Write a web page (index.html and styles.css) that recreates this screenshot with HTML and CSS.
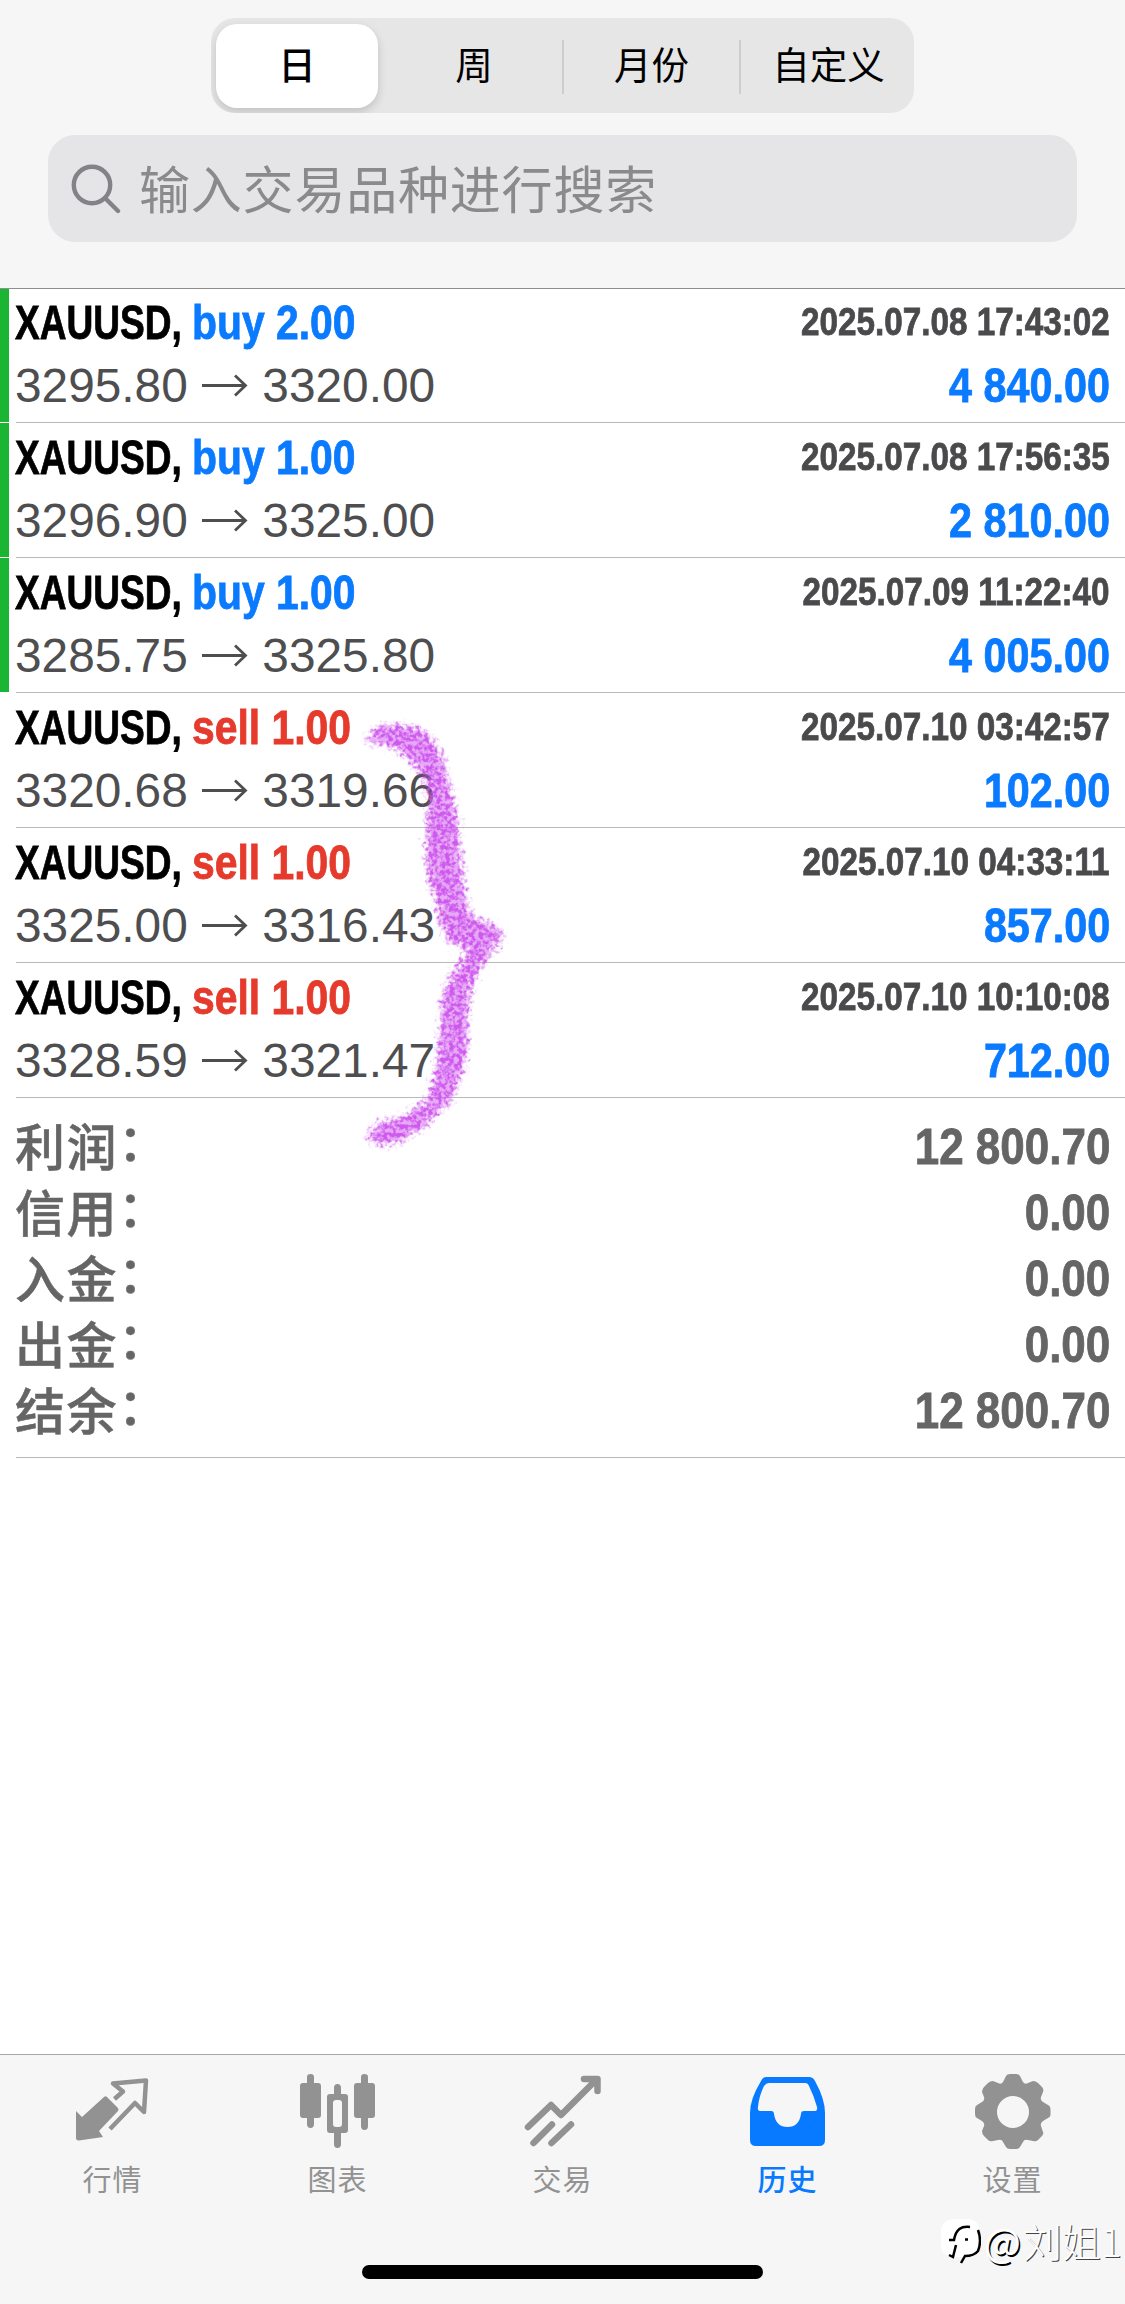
FILE: index.html
```html
<!DOCTYPE html>
<html lang="zh-CN">
<head>
<meta charset="utf-8">
<title>历史</title>
<link rel="stylesheet" href="styles.css">
</head>
<body>
<div class="screen">
  <header class="header">
    <nav class="segments">
      <span class="segment active">日</span>
      <span class="segment">周</span>
      <span class="segment divided">月份</span>
      <span class="segment divided">自定义</span>
    </nav>
    <div class="search">
      <svg class="search-icon" viewBox="0 0 50 50"><circle cx="21" cy="21" r="18.2"/><path d="M34 34L47 47"/></svg>
      <span>输入交易品种进行搜索</span>
    </div>
  </header>

  <main class="content">
    <ul class="deals">
      <li class="deal marked"><div class="line"><b class="symbol">XAUUSD,</b><b class="side buy">buy 2.00</b><time>2025.07.08 17:43:02</time></div><div class="line"><span class="prices">3295.80 <svg class="arrow" viewBox="0 0 46 24"><path d="M0 11.5H43M33 1.5L43.500 11.500L33 21.500"/></svg> 3320.00</span><b class="profit">4 840.00</b></div></li>
      <li class="deal marked"><div class="line"><b class="symbol">XAUUSD,</b><b class="side buy">buy 1.00</b><time>2025.07.08 17:56:35</time></div><div class="line"><span class="prices">3296.90 <svg class="arrow" viewBox="0 0 46 24"><path d="M0 11.5H43M33 1.5L43.500 11.500L33 21.500"/></svg> 3325.00</span><b class="profit">2 810.00</b></div></li>
      <li class="deal marked"><div class="line"><b class="symbol">XAUUSD,</b><b class="side buy">buy 1.00</b><time>2025.07.09 11:22:40</time></div><div class="line"><span class="prices">3285.75 <svg class="arrow" viewBox="0 0 46 24"><path d="M0 11.5H43M33 1.5L43.500 11.500L33 21.500"/></svg> 3325.80</span><b class="profit">4 005.00</b></div></li>
      <li class="deal"><div class="line"><b class="symbol">XAUUSD,</b><b class="side sell">sell 1.00</b><time>2025.07.10 03:42:57</time></div><div class="line"><span class="prices">3320.68 <svg class="arrow" viewBox="0 0 46 24"><path d="M0 11.5H43M33 1.5L43.500 11.500L33 21.500"/></svg> 3319.66</span><b class="profit">102.00</b></div></li>
      <li class="deal"><div class="line"><b class="symbol">XAUUSD,</b><b class="side sell">sell 1.00</b><time>2025.07.10 04:33:11</time></div><div class="line"><span class="prices">3325.00 <svg class="arrow" viewBox="0 0 46 24"><path d="M0 11.5H43M33 1.5L43.500 11.500L33 21.500"/></svg> 3316.43</span><b class="profit">857.00</b></div></li>
      <li class="deal"><div class="line"><b class="symbol">XAUUSD,</b><b class="side sell">sell 1.00</b><time>2025.07.10 10:10:08</time></div><div class="line"><span class="prices">3328.59 <svg class="arrow" viewBox="0 0 46 24"><path d="M0 11.5H43M33 1.5L43.500 11.500L33 21.500"/></svg> 3321.47</span><b class="profit">712.00</b></div></li>
    </ul>

    <dl class="summary">
      <div class="total"><dt>利润<span class="colon">：</span></dt><dd>12 800.70</dd></div>
      <div class="total"><dt>信用<span class="colon">：</span></dt><dd>0.00</dd></div>
      <div class="total"><dt>入金<span class="colon">：</span></dt><dd>0.00</dd></div>
      <div class="total"><dt>出金<span class="colon">：</span></dt><dd>0.00</dd></div>
      <div class="total"><dt>结余<span class="colon">：</span></dt><dd>12 800.70</dd></div>
    </dl>

    <svg class="brace" viewBox="340 690 200 480">
      <defs>
        <filter id="crayon" x="340" y="690" width="200" height="480" filterUnits="userSpaceOnUse" color-interpolation-filters="sRGB">
          <feTurbulence type="fractalNoise" baseFrequency="0.24" numOctaves="2" seed="4" result="noise"/>
          <feGaussianBlur in="SourceGraphic" stdDeviation="2.4" result="soft"/>
          <feDisplacementMap in="soft" in2="noise" scale="17" xChannelSelector="R" yChannelSelector="G" result="rough"/>
          <feColorMatrix in="noise" type="matrix" values="0 0 0 0 0  0 0 0 0 0  0 0 0 0 0  0 0 4 0 -1.5" result="grain"/>
          <feComposite in="rough" in2="grain" operator="in" result="speckled"/>
          <feComponentTransfer in="rough" result="base"><feFuncA type="linear" slope="0.52"/></feComponentTransfer>
          <feMerge result="chalk"><feMergeNode in="base"/><feMergeNode in="speckled"/></feMerge>
          <feGaussianBlur in="chalk" stdDeviation="0.7"/>
        </filter>
      </defs>
      <path filter="url(#crayon)" d="M365 741L378 728L394 725L417 728L430 737L441 755L447 776L450 792L456 812L459 845L463 880L466 906L474 918L492 925L504 935L492 950L480 969L471 986L467 1010L467 1045L464 1064L457 1084L449 1103L441 1109L431 1117L425 1128L413 1132L402 1141L384 1145L367 1138L375 1126L392 1119L404 1118L415 1107L427 1102L432 1086L436 1070L440 1040L442 1005L447 985L457 967L469 952L466 948L448 940L440 920L436 900L430 882L427 860L427 822L430 800L424 776L413 763L399 750L382 744Z"/>
    </svg>
  </main>

  <footer class="tabbar">
    <div class="tabs">
      <div class="tab"><svg class="icon" viewBox="0 0 80 80"><path class="fill" d="M3 33L9 39L31 19Q32.500 17.500 34 19L45 30Q46 32 45 33L26 53L30 59L6 62.500Q3 62.500 3 60Z"/><path class="line-icon" d="M41.500 21L50 13.500L40 5.500L73 2.500L71 34L62 25L37 51"/></svg><span>行情</span></div>
      <div class="tab"><svg class="icon" viewBox="0 0 80 80"><path class="fill" d="M9-1Q9-4 12.500-4T16-1V5H20Q23 5 23 8V37Q23 40 20 40H16V46Q16 50 12.500 50T9 46V40H5Q2 40 2 37V8Q2 5 5 5H9ZM63-1Q63-4 66.500-4T70-1V5H74Q77 5 77 8V37Q77 40 74 40H70V48Q70 52 66.500 52T63 48V40H59Q56 40 56 37V8Q56 5 59 5H63ZM36 10Q36 6 39.500 6T43 10V16H47Q50 16 50 19V52Q50 55 47 55H43V66Q43 70 39.500 70T36 66V55H32Q29 55 29 52V19Q29 16 32 16H36ZM38 22Q35 22 35 25V46Q35 49 38 49H41Q44 49 44 46V25Q44 22 41 22Z"/></svg><span>图表</span></div>
      <div class="tab"><svg class="icon" viewBox="0 0 80 80"><path class="trend" d="M5 49L28 27L38 37L73 2M61 1H74.500V13M10.500 65L29 46.500M28.500 65L48 46.500"/></svg><span>交易</span></div>
      <div class="tab current"><svg class="icon" viewBox="0 0 80 80"><path class="fill" d="M18-1H61Q65-1 67 3Q77 21 77 35V62Q77 68 71 68H8Q2 68 2 62V35Q2 21 13 3Q15-1 18-1ZM21 5Q18 5 16 8Q11 18 10 29Q9 33 13 33H23Q26 33 26 36Q28 49 39.500 49T53 36Q53 33 56 33H66Q70 33 69 29Q66 18 61 8Q60 5 57 5Z"/></svg><span>历史</span></div>
      <div class="tab"><svg class="icon" viewBox="0 0 80 80"><path class="fill" d="M33-2Q34-4 37-4H43Q46-4 47-2L50 4Q52 7 55 5L60 3Q63 3 65 5L69 9Q71 11 70 14L68 19Q67 22 70 24L75 27Q77.500 28 77.500 31V37Q77.500 39 75 40L70 43Q67 45 68 48L70 54Q71 56 69 58L65 62Q63 64 60 63L55 62Q51 61 50 64L47 69Q46 71 43 71H37Q34 71 33 69L30 64Q29 61 25 62L20 63Q17 64 15 62L11 58Q9 56 9 53L11 48Q12 45 9 43L4 40Q2 39 2 36V31Q2 28 4 27L9 24Q12 22 11 19L9 14Q9 11 11 9L15 5Q17 3 20 3L25 5Q28 7 30 4ZM40 18A16 16 0 1 0 40 50A16 16 0 1 0 40 18Z"/></svg><span>设置</span></div>
    </div>
    <div class="home-bar"></div>
    <div class="watermark"><svg class="mark" viewBox="0 0 40 46"><rect width="39" height="38" rx="12"/><path d="M8 21H13C15 10 20 7 29 8M15 26L12 38L8 36M24 20.500H27M37 11Q41 22 37 32Q33 37 24 37L20 44"/></svg><span class="at">@</span><span>刘姐1</span></div>
  </footer>
</div>
</body>
</html>
```
FILE: styles.css
```css
* { box-sizing: border-box; }
body { margin: 0; background: #fff; font-family: "Liberation Sans", "Noto Sans CJK SC", sans-serif; }
.screen { width: 1125px; height: 2304px; display: flex; flex-direction: column; overflow: hidden; position: relative; }

.header { height: 288px; flex: none; background: #f6f6f6; padding: 18px 48px 0; display: flex; flex-direction: column; align-items: center; gap: 22px; }
.segments { width: 703px; height: 95px; border-radius: 24px; background: #e6e6e6; padding: 6px 0 5px 5px; display: flex; align-items: stretch; overflow: hidden; }
.segment { flex: 0 0 177px; display: flex; align-items: center; justify-content: center; font: 400 37.500px/1 "Noto Sans CJK SC", sans-serif; color: #000; padding-bottom: 6px; background: linear-gradient(#cdcdcd, #cdcdcd) no-repeat 0 16px / 0 54px; }
.segment.divided { background-size: 2px 54px; padding-left: 2px; }
.segment.active { flex-basis: 162px; margin-right: 8px; border-radius: 21px; background: #fff; box-shadow: 0 4px 10px rgba(0,0,0,.16); font-weight: 500; }
.segment:nth-child(2) { flex-basis: 176px; }
.search { width: 1029px; height: 107px; border-radius: 27px; background: #e5e5e7; display: flex; align-items: center; gap: 18px; padding-left: 23px; color: #8a8a8d; font: 400 51px/1 "Noto Sans CJK SC", sans-serif; letter-spacing: .8px; }
.search span { padding-bottom: 2px; }
.search-icon { width: 50px; height: 50px; fill: none; stroke: #838387; stroke-width: 4.400; stroke-linecap: round; }

.content { flex: 1; position: relative; }
.deals { list-style: none; margin: 0; padding: 0; border-top: 1px solid #8e8e8e; }
.deal { height: 135px; padding: 3px 15px 0; display: flex; flex-direction: column; background: linear-gradient(#b9b9b9, #b9b9b9) no-repeat 16px 100% / 100% 1px; }
.deal:first-child { height: 134px; padding-top: 2px; }
.deal.marked { background-image: linear-gradient(#b9b9b9, #b9b9b9), linear-gradient(#1bb534, #1bb534); background-position: 16px 100%, 0 0; background-size: 100% 1px, 9px calc(100% - 1px); }
.line { height: 63px; display: flex; align-items: center; white-space: nowrap; }
/* Condensed bold face: the wide face squeezed horizontally */
.symbol, .side, time, .profit, dd { -webkit-text-stroke: .8px currentColor; }
.symbol, .side { font-size: 47.500px; flex: none; transform-origin: 0 50%; }
.symbol { width: 177px; transform: scaleX(.78); color: #000; }
.side { transform: scaleX(.86); }
.buy, .profit { color: #0a7aff; }
.sell { color: #e53a2c; }
time, .profit { margin-left: auto; font-weight: 700; transform-origin: 100% 50%; }
time { font-size: 39.500px; color: #4a4a4c; transform: scaleX(.842); padding-bottom: 2px; }
.prices { font-size: 47.800px; color: #4e4e50; }
.arrow { width: 46px; height: 24px; margin: 0 1px; position: relative; top: -4px; fill: none; stroke: #4e4e50; stroke-width: 2.800; }
.profit { font-size: 47.500px; transform: scaleX(.87); }

.summary { margin: 0; height: 360px; padding: 16px 15px 0; background: linear-gradient(#b9b9b9, #b9b9b9) no-repeat 16px 100% / 100% 1px; }
.total { height: 66px; display: flex; align-items: center; justify-content: space-between; color: #656565; }
dt { font: 500 50px/60px "Noto Sans CJK SC", sans-serif; letter-spacing: 1.500px; padding-bottom: 6px; -webkit-text-stroke: .5px currentColor; }
.colon { position: relative; top: -5px; }
dd { margin: 0; font-size: 50px; font-weight: 700; transform: scaleX(.88); transform-origin: 100% 50%; }
.brace { position: absolute; left: 340px; top: 402px; width: 200px; height: 480px; fill: #cf58ee; pointer-events: none; }

.tabbar { height: 250px; flex: none; background: #f6f6f6; border-top: 1px solid #a8a8a8; position: relative; display: flex; flex-direction: column; align-items: center; justify-content: space-between; padding-bottom: 25px; }
.tabs { display: flex; width: 100%; padding-top: 23px; }
.tab { flex: 1; display: flex; flex-direction: column; align-items: center; color: #929292; font: 400 29px/40px "Noto Sans CJK SC", sans-serif; letter-spacing: 1px; }
.icon { width: 80px; height: 80px; overflow: visible; }
.fill { fill: currentColor; fill-rule: evenodd; }
.line-icon { fill: none; stroke: currentColor; stroke-width: 4.500; stroke-linejoin: round; }
.trend { fill: none; stroke: currentColor; stroke-width: 6.500; stroke-linecap: round; stroke-linejoin: round; }
.current { color: #087aff; }
.current span { font-weight: 500; }
.home-bar { width: 401px; height: 14px; border-radius: 7px; background: #000; }
.watermark { position: absolute; left: 941px; top: 162px; display: flex; align-items: center; color: #fff; font: 300 39px/44px "Noto Sans CJK SC", sans-serif; text-shadow: 1px 1px 0 #444; white-space: nowrap; }
.at { width: 39px; font-weight: 400; text-shadow: 1.500px 1.500px 0 #000; }
.mark { width: 40px; height: 46px; margin-right: 3px; fill: #fff; position: relative; top: 2px; }
.mark path { fill: none; stroke: #000; stroke-width: 2.500; }
```
